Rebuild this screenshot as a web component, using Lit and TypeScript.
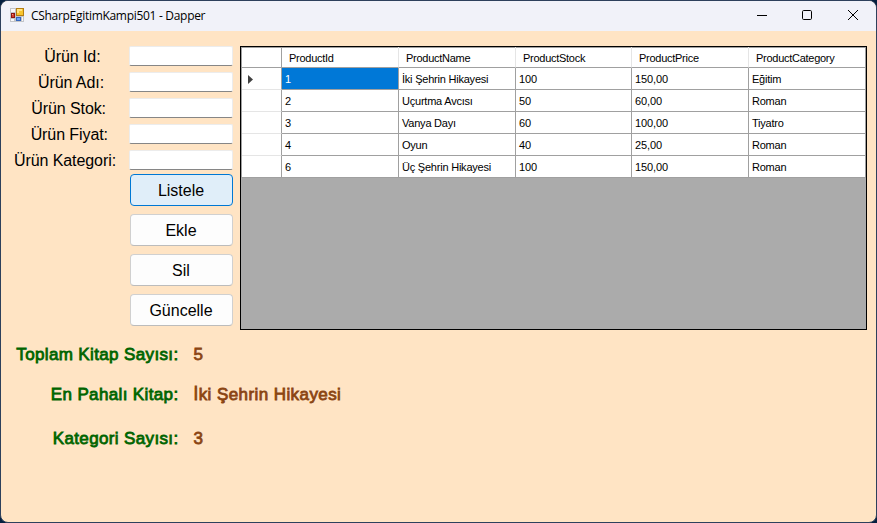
import { LitElement, html, css } from "lit";
import { customElement } from "lit/decorators.js";
import { styleMap } from "lit/directives/style-map.js";
import { classMap } from "lit/directives/class-map.js";

interface Field { label: string; end: number }

const fields: Field[] = [
  { label: "Ürün Id:", end: 28.5 },
  { label: "Ürün Adı:", end: 25 },
  { label: "Ürün Stok:", end: 23 },
  { label: "Ürün Fiyat:", end: 21 },
  { label: "Ürün Kategori:", end: 13 },
];
const buttons = ["Listele", "Ekle", "Sil", "Güncelle"];
const columns = ["ProductId", "ProductName", "ProductStock", "ProductPrice", "ProductCategory"];
const rows: string[][] = [
  ["1", "İki Şehrin Hikayesi", "100", "150,00", "Eğitim"],
  ["2", "Uçurtma Avcısı", "50", "60,00", "Roman"],
  ["3", "Vanya Dayı", "60", "100,00", "Tiyatro"],
  ["4", "Oyun", "40", "25,00", "Roman"],
  ["6", "Üç Şehrin Hikayesi", "100", "150,00", "Roman"],
];
const stats = [
  ["Toplam Kitap Sayısı:", "5"],
  ["En Pahalı Kitap:", "İki Şehrin Hikayesi"],
  ["Kategori Sayısı:", "3"],
];

@customElement("title-bar")
export class TitleBar extends LitElement {
  static styles = css`
    :host { display: flex; align-items: center; height: 30px; background: #f1f2f9; box-sizing: border-box; padding-left: 9px; }
    .name { flex: 1; margin-left: 7px; font: 12px/16px "Open Sans", "Noto Sans", sans-serif; letter-spacing: -0.3px; color: #000; white-space: nowrap; }
    .controls { display: flex; }
    .controls svg { display: block; width: 46px; height: 30px; }
    .icon { display: block; flex: none; margin-bottom: 2px; }
  `;
  render() {
    return html`
      <svg class="icon" width="14" height="14" viewBox="0 0 14 14" shape-rendering="crispEdges">
        <path d="M0 0h14v14H0z" fill="#c3c5c9" />
        <path d="M1 1h4v3H1zM1 11h3v2H1zM12 9h1v4h-1z" fill="#f8f8fa" />
        <path d="M6 0h8v8H6z" fill="#b57e12" />
        <path d="M7 1h6v6H7z" fill="#f8c52e" /><path d="M7 1h5v2H9v2H7z" fill="#ffe486" />
        <path d="M1 5h4v5H1z" fill="#8e1713" /><path d="M2 6h2v3H2z" fill="#d7422f" /><path d="M2 6h1v1H2z" fill="#f39a84" />
        <path d="M6 9h5v4H6z" fill="#3566bd" /><path d="M7 10h3v2H7z" fill="#6da3f3" />
      </svg>
      <div class="name">CSharpEgitimKampi501 - Dapper</div>
      <div class="controls">
        <svg viewBox="0 0 46 30"><path d="M19 14.5h10" stroke="#000" /></svg>
        <svg viewBox="0 0 46 30"><rect x="18.5" y="9.5" width="9" height="9" rx="1.2" fill="none" stroke="#000" /></svg>
        <svg viewBox="0 0 46 30"><path d="M18 9l10 10M28 9L18 19" stroke="#000" fill="none" /></svg>
      </div>`;
  }
}

@customElement("data-grid")
export class DataGrid extends LitElement {
  static styles = css`
    :host { display: block; box-sizing: border-box; width: 627px; height: 284px; border: 1px solid #000; background: #ababab;
      font: 11px/13px "Liberation Sans", Arial, sans-serif; color: #000; }
    .row { display: grid; grid-template-columns: 40px 117px 117px 116px 117px 117px; height: 22px; padding-left: 1px; background: #fff; box-shadow: inset 1px 0 #a0a0a0; }
    .row.head { height: 21px; box-shadow: inset 1px 0 #a0a0a0, inset 0 1px #a0a0a0; }
    .cell { box-sizing: border-box; border-right: 1px solid #a0a0a0; border-bottom: 1px solid #a0a0a0; padding: 5px 0 0 3px; white-space: nowrap; overflow: hidden; letter-spacing: -0.22px; }
    .cell.number { letter-spacing: -0.1px; }
    .head .cell { padding: 5px 0 0 7px; border-right-color: #e5e5e5; letter-spacing: -0.27px; }
    .head .cell:first-child, .head .cell:last-child { border-right-color: #a0a0a0; }
    .cell.marker { padding: 1px 0 0 6px; border-bottom-color: #e5e5e5; display: flex; align-items: center; }
    .head .marker, .row:last-child .marker { border-bottom-color: #a0a0a0; }
    .selected { background: #0078d7; color: #fff; }
  `;
  render() {
    return html`
      <div class="row head"><div class="cell marker"></div>${columns.map((c) => html`<div class="cell">${c}</div>`)}</div>
      ${rows.map((r, i) => html`<div class="row">
        <div class="cell marker">${i === 0 ? html`<svg width="5" height="9" viewBox="0 0 5 9"><path d="M0 0l5 4.5L0 9z" fill="#404040" /></svg>` : ""}</div>
        ${r.map((t, j) => html`<div class=${classMap({ cell: true, selected: i === 0 && j === 0, number: j === 2 || j === 3 })}>${t}</div>`)}
      </div>`)}`;
  }
}

@customElement("app-root")
export class AppRoot extends LitElement {
  static styles = css`
    :host { display: block; height: 523px; background: #05203f; overflow: hidden; font-family: "Liberation Sans", Arial, sans-serif; color: #000; }
    .window { box-sizing: border-box; height: 523px; border: 1px solid #2d405c; border-radius: 8px; overflow: hidden; background: #ffe4c4; }
    .main { display: flex; padding: 15px 9px 0 0; height: 299px; box-sizing: border-box; }
    .form { width: 232px; margin-right: 7px; flex: none; }
    .field { display: flex; justify-content: space-between; height: 20px; margin-bottom: 6px; }
    .label { flex: 1; text-align: right; font-size: 16px; line-height: 22px; letter-spacing: -0.08px; white-space: nowrap; }
    .input { box-sizing: border-box; width: 104px; height: 20px; background: #fff; border: 1px solid #ececec; border-bottom-color: #868686; border-radius: 2px; padding: 0; outline: 0; }
    .buttons { display: flex; flex-direction: column; gap: 8px; align-items: flex-end; margin-top: -2px; }
    .btn { box-sizing: border-box; width: 103px; height: 32px; border: 1px solid #d0d0d0; border-bottom-color: #bcbcbc; border-radius: 4px; background: #fdfdfd; font: 16px/20px "Liberation Sans", Arial, sans-serif; color: #000; padding: 2px 1px 0 0; }
    .btn.active { background: #e0eef9; border-color: #0078d4; }
    .stats { display: grid; grid-template-columns: 177.5px 1fr; column-gap: 15px; grid-template-rows: 40px 44px 40px; padding-top: 15px; font: 17px/20px "Liberation Sans", Arial, sans-serif; letter-spacing: 0.36px; -webkit-text-stroke: 0.8px currentColor; white-space: nowrap; }
    .key { color: #006400; text-align: right; }
    .value { color: #8b4513; letter-spacing: 0.42px; }
  `;
  render() {
    return html`<div class="window">
      <title-bar></title-bar>
      <div class="main">
        <div class="form">
          ${fields.map((f) => html`<div class="field">
            <div class="label" style=${styleMap({ paddingRight: `${f.end}px` })}>${f.label}</div><input class="input" />
          </div>`)}
          <div class="buttons">${buttons.map((b, i) => html`<button class=${classMap({ btn: true, active: i === 0 })}>${b}</button>`)}</div>
        </div>
        <data-grid></data-grid>
      </div>
      <div class="stats">${stats.map(([k, v]) => html`<div class="key">${k}</div><div class="value">${v}</div>`)}</div>
    </div>`;
  }
}
